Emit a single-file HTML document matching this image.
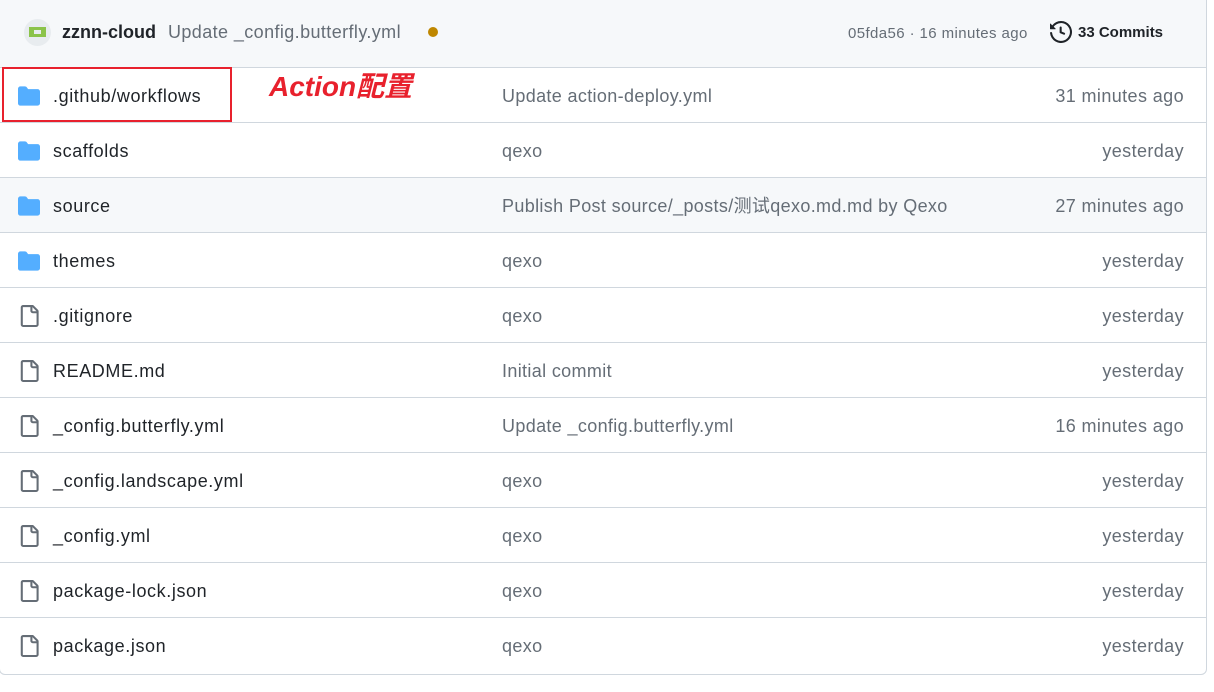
<!DOCTYPE html><html><head><meta charset="utf-8"><style>
body{margin:0;background:#fff;font-family:"Liberation Sans","Noto Sans CJK SC",sans-serif;width:1214px;height:692px;overflow:hidden;position:relative}
.box{position:absolute;left:-1px;top:-1px;width:1206px;height:674px;border:1px solid #d0d7de;border-radius:0 0 6px 6px;overflow:hidden}
.hdr{height:67px;background:#f6f8fa;border-bottom:1px solid #d0d7de;position:relative}
.row{height:54px;border-bottom:1px solid #d0d7de;position:relative;font-size:18px;color:#1f2328;letter-spacing:0.6px}
.row:last-child{border-bottom:none}
.row.g{background:#f6f8fa}
.row span{position:absolute;top:17px;line-height:22px;white-space:nowrap}
.n{left:53px}.m{left:502px;color:#656d76;letter-spacing:0.35px}.t{right:22px;color:#656d76;letter-spacing:0.4px}
.ic{position:absolute;left:18px;top:17px}
</style></head><body>
<div class="box">
<div class="hdr">
<div style="position:absolute;left:24px;top:19px;width:27px;height:27px;border-radius:50%;background:#e8ecef;"><div style="position:absolute;left:5px;top:8px;width:17px;height:10px;background:#8bc34a"></div><div style="position:absolute;left:10px;top:11px;width:7px;height:4px;background:#e8ecef"></div></div>
<span style="position:absolute;left:62px;top:22px;font-size:18px;font-weight:bold;color:#1f2328">zznn-cloud</span>
<span style="position:absolute;left:168px;top:22px;font-size:18px;color:#656d76;letter-spacing:0.4px">Update _config.butterfly.yml</span>
<div style="position:absolute;left:428px;top:27px;width:10px;height:10px;border-radius:50%;background:#bf8700"></div>
<span style="position:absolute;left:848px;top:25px;font-size:15px;color:#656d76;letter-spacing:0.4px">05fda56 · 16 minutes ago</span>
<svg style="position:absolute;left:1050px;top:21px" width="22" height="22" viewBox="0 0 16 16" fill="#1f2328"><path d="M1.643 3.143.427 1.927A.25.25 0 0 0 0 2.104V5.75c0 .138.112.25.25.25h3.646a.25.25 0 0 0 .177-.427L2.715 4.215a6.5 6.5 0 1 1-1.18 4.458.75.75 0 1 0-1.493.154 8.001 8.001 0 1 0 1.6-5.684ZM7.75 4a.75.75 0 0 1 .75.75v2.992l2.028.812a.75.75 0 0 1-.557 1.392l-2.5-1A.751.751 0 0 1 7 8.25v-3.5A.75.75 0 0 1 7.75 4Z"/></svg>
<span style="position:absolute;left:1078px;top:24px;font-size:15px;font-weight:bold;color:#1f2328">33 Commits</span>
</div>
<div id="rows"></div>
</div>
<div style="position:absolute;left:2px;top:67px;width:226px;height:51px;border:2px solid #e8212d"></div>
<div style="position:absolute;left:269px;top:65px;font-size:28px;font-weight:bold;font-style:italic;color:#e8212d">Action配置</div>
<script>
var F='<svg class="ic" width="22" height="22" viewBox="0 0 16 16" fill="#54aeff"><path d="M1.75 1A1.75 1.75 0 0 0 0 2.75v10.5C0 14.216.784 15 1.75 15h12.5A1.75 1.75 0 0 0 16 13.25v-8.5A1.75 1.75 0 0 0 14.25 3H7.5a.25.25 0 0 1-.2-.1l-.9-1.2C6.070 1.26 5.55 1 5 1H1.75Z"/></svg>';
var D='<svg class="ic" width="22" height="22" viewBox="0 0 16 16" fill="#656d76"><path d="M2 1.75C2 .784 2.784 0 3.750 0h6.586c.464 0 .909.184 1.237.513l2.914 2.914c.329.328.513.773.513 1.237v9.586A1.75 1.75 0 0 1 13.25 16h-9.5A1.75 1.75 0 0 1 2 14.25Zm1.75-.25a.25.25 0 0 0-.25.25v12.5c0 .138.112.25.25.25h9.5a.25.25 0 0 0 .25-.25V6h-2.75A1.75 1.75 0 0 1 9 4.25V1.5Zm6.75.062V4.25c0 .138.112.25.25.25h2.688Z"/></svg>';
var r=[[F,'.github/workflows','Update action-deploy.yml','31 minutes ago'],[F,'scaffolds','qexo','yesterday'],[F,'source','Publish Post source/_posts/测试qexo.md.md by Qexo','27 minutes ago',1],[F,'themes','qexo','yesterday'],[D,'.gitignore','qexo','yesterday'],[D,'README.md','Initial commit','yesterday'],[D,'_config.butterfly.yml','Update _config.butterfly.yml','16 minutes ago'],[D,'_config.landscape.yml','qexo','yesterday'],[D,'_config.yml','qexo','yesterday'],[D,'package-lock.json','qexo','yesterday'],[D,'package.json','qexo','yesterday']];
var h='';r.forEach(function(x){h+='<div class="row'+(x[4]?' g':'')+'">'+x[0]+'<span class="n">'+x[1]+'</span><span class="m">'+x[2]+'</span><span class="t">'+x[3]+'</span></div>'});
document.getElementById('rows').innerHTML=h;
</script>
</body></html>
